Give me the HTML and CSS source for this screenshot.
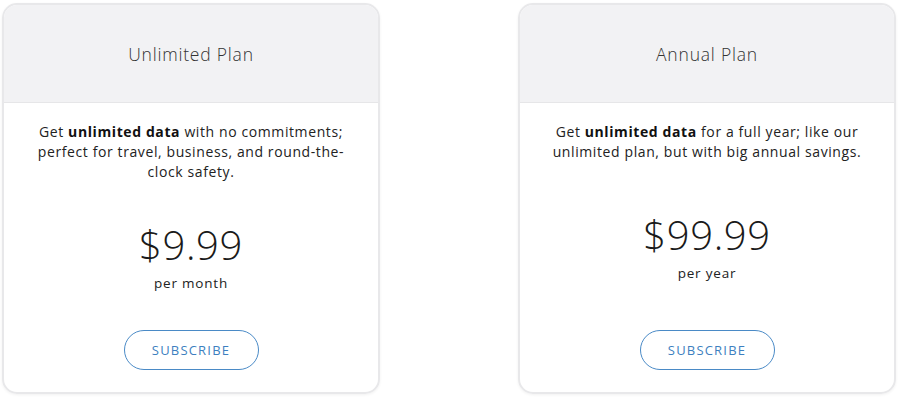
FILE: index.html
```html
<!DOCTYPE html>
<html lang="en">
<head>
    <meta charset="UTF-8">
    <meta name="viewport" content="width=device-width, initial-scale=1.0">
    <link rel="stylesheet" href="styles.css">
    <title>Plans</title>
</head>
<body>
    <div class="plans">
        <div class="plan">
            <div class="plan-header">Unlimited Plan</div>
            <div class="plan-body">
                <p class="plan-text">Get <b>unlimited data</b> with no commitments; perfect for travel, business, and round-the-clock safety.</p>
                <div class="plan-price">
                    <div class="amount">$9.99</div>
                    <div class="period">per month</div>
                </div>
                <button class="subscribe">SUBSCRIBE</button>
            </div>
        </div>

        <div class="plan">
            <div class="plan-header">Annual Plan</div>
            <div class="plan-body">
                <p class="plan-text">Get <b>unlimited data</b> for a full year; like our unlimited plan, but with big annual savings.</p>
                <div class="plan-price">
                    <div class="amount">$99.99</div>
                    <div class="period">per year</div>
                </div>
                <button class="subscribe">SUBSCRIBE</button>
            </div>
        </div>
    </div>
</body>
</html>
```

FILE: styles.css
```css
* {
    box-sizing: border-box;
}

body {
    margin: 0;
    background: #fff;
    font-family: "Open Sans", "Liberation Sans", sans-serif;
    color: #222;
    width: 900px;
    height: 402px;
    overflow: hidden;
}

.plans {
    display: flex;
    justify-content: space-between;
    padding: 3px 4px 0 2px;
}

.plan {
    width: 378px;
    height: 391px;
    border: 2px solid #e8e8ea;
    border-radius: 15px;
    box-shadow: 0 1px 3px rgba(0, 0, 0, 0.06);
    overflow: hidden;
    display: flex;
    flex-direction: column;
}

.plan-header {
    height: 98px;
    flex-shrink: 0;
    background: #f2f2f4;
    border-bottom: 1px solid #e6e6e8;
    display: flex;
    align-items: center;
    justify-content: center;
    font-size: 17.5px;
    font-weight: 300;
    color: #333;
    letter-spacing: 0.8px;
}

.plan-body {
    flex: 1;
    display: flex;
    flex-direction: column;
    align-items: center;
    padding: 19px 28px 22px;
}

.plan-text {
    margin: 0;
    font-size: 14px;
    line-height: 20px;
    text-align: center;
    letter-spacing: 0.6px;
}

.plan-text b {
    font-weight: 700;
    color: #111;
}

.plan-price {
    flex: 1;
    display: flex;
    flex-direction: column;
    align-items: center;
    justify-content: center;
    padding-top: 2px;
}

.amount {
    font-size: 40px;
    font-weight: 300;
    line-height: 44px;
    letter-spacing: 0.6px;
    color: #1a1a1a;
}

.period {
    margin-top: 7px;
    font-size: 13.5px;
    letter-spacing: 0.8px;
}

.subscribe {
    width: 135px;
    height: 40px;
    border: 1px solid #4a8ac6;
    border-radius: 20px;
    background: #fff;
    color: #3d7fc0;
    font-family: "Open Sans", "Liberation Sans", sans-serif;
    font-size: 13px;
    letter-spacing: 1.2px;
    cursor: pointer;
}
```
